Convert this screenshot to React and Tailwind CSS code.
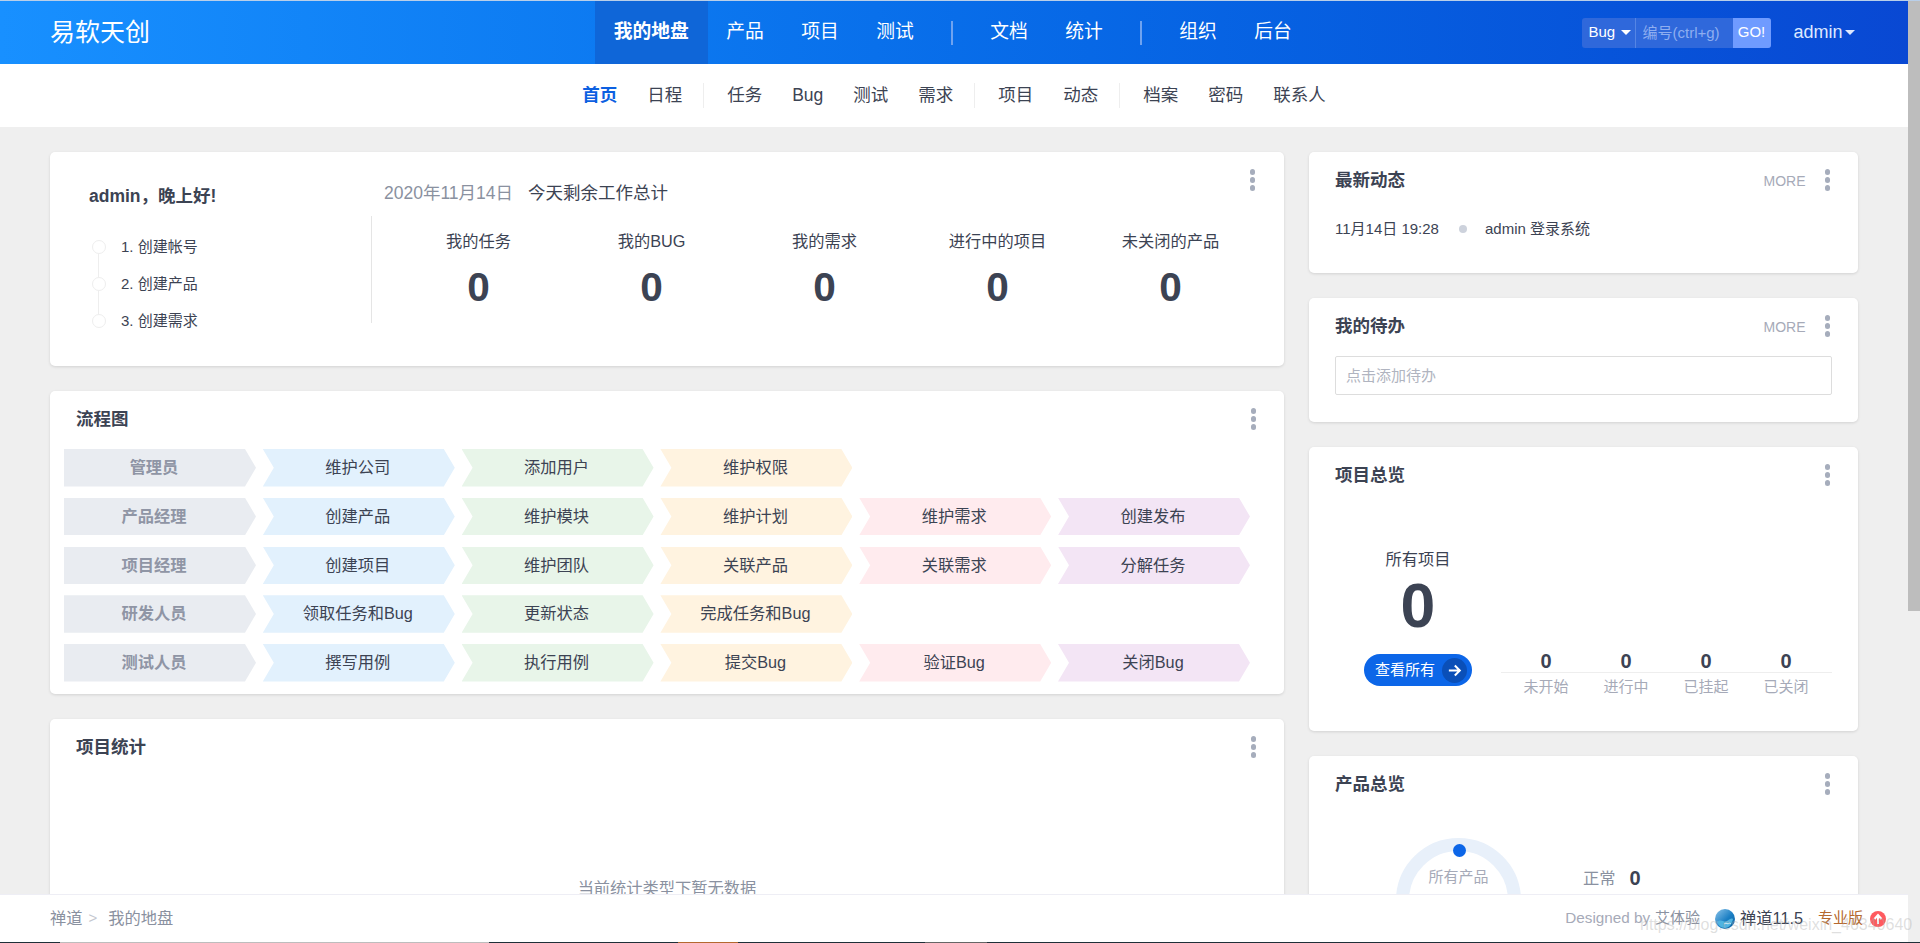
import React from "react";

const mainNav = [
  { text: "我的地盘", active: true },
  { text: "产品" },
  { text: "项目" },
  { text: "测试" },
  { divider: true },
  { text: "文档" },
  { text: "统计" },
  { divider: true },
  { text: "组织" },
  { text: "后台" },
];

const subNav = [
  { text: "首页", active: true },
  { text: "日程" },
  { divider: true },
  { text: "任务" },
  { text: "Bug" },
  { text: "测试" },
  { text: "需求" },
  { divider: true },
  { text: "项目" },
  { text: "动态" },
  { divider: true },
  { text: "档案" },
  { text: "密码" },
  { text: "联系人" },
];

const stats = ["我的任务", "我的BUG", "我的需求", "进行中的项目", "未关闭的产品"];

const flowRows = [
  ["管理员", "维护公司", "添加用户", "维护权限"],
  ["产品经理", "创建产品", "维护模块", "维护计划", "维护需求", "创建发布"],
  ["项目经理", "创建项目", "维护团队", "关联产品", "关联需求", "分解任务"],
  ["研发人员", "领取任务和Bug", "更新状态", "完成任务和Bug"],
  ["测试人员", "撰写用例", "执行用例", "提交Bug", "验证Bug", "关闭Bug"],
];

const arrowColors = ["bg-[#e2f1fd]", "bg-[#e8f5e9]", "bg-[#fff3e0]", "bg-[#ffebee]", "bg-[#f3e5f5]"];

const Dots = () => (
  <div className="flex flex-col gap-[2.5px]">
    <span className="h-[5.5px] w-[5.5px] rounded-full bg-[#a6adbc]" />
    <span className="h-[5.5px] w-[5.5px] rounded-full bg-[#a6adbc]" />
    <span className="h-[5.5px] w-[5.5px] rounded-full bg-[#a6adbc]" />
  </div>
);

const Card = ({ title, more, className = "", children }) => (
  <div className={`shrink-0 overflow-hidden rounded-[5px] bg-white shadow-[0_1px_3px_rgba(0,0,0,0.12)] ${className}`}>
    <div className="mt-[16px] flex h-[24px] items-center pl-[26px] pr-[28px]">
      <h3 className="text-[17.5px] font-bold leading-[24px] text-[#3c4353]">{title}</h3>
      {more && <span className="ml-auto mr-[19px] mt-[2px] text-[14px] text-[#a6aab8]">MORE</span>}
      <div className={more ? "" : "ml-auto"}>
        <Dots />
      </div>
    </div>
    {children}
  </div>
);

const Header = () => (
  <div className="flex h-[63px] items-center bg-linear-to-r from-[#1890ff] to-[#0948d3] pl-[50px] text-white">
    <div className="w-[545px] text-[25px] leading-[63px]">易软天创</div>
    <div className="flex h-full items-center text-[18.75px]">
      {mainNav.map((item, i) =>
        item.divider ? (
          <span key={i} className="mx-[18.5px] h-[24px] w-[2px] bg-[#6fa3f0]" />
        ) : (
          <a
            key={i}
            className={`flex h-full items-center px-[18.75px] ${item.active ? "bg-[#0f66d8] font-bold" : ""}`}
          >
            {item.text}
          </a>
        )
      )}
    </div>
    <div className="ml-[271px] flex h-[30px] w-[189px] items-center overflow-hidden rounded-[3px] bg-[#2f68db] text-[15px]">
      <div className="flex h-full w-[54px] items-center border-r border-[#5585e4] pl-[7px]">
        Bug
        <span className="ml-[6px] h-0 w-0 border-x-[5px] border-t-[5px] border-x-transparent border-t-white" />
      </div>
      <input
        placeholder="编号(ctrl+g)"
        className="h-full w-[97px] bg-transparent pl-[7px] outline-none placeholder:text-[#8eaef0]"
      />
      <div className="flex h-full flex-1 items-center justify-center bg-[#6f9bff]">GO!</div>
    </div>
    <div className="ml-[23px] flex items-center text-[18px] text-[#dde8ff]">
      admin
      <span className="ml-[2px] h-0 w-0 border-x-[5px] border-t-[5px] border-x-transparent border-t-[#dde8ff]" />
    </div>
  </div>
);

const SubNav = () => (
  <div className="flex h-[63px] items-center justify-center bg-white text-[17.5px] text-[#3c4353]">
    {subNav.map((item, i) =>
      item.divider ? (
        <span key={i} className="ml-[6px] mr-[8px] h-[25px] w-px bg-[#eeeeee]" />
      ) : (
        <a key={i} className={`px-[15px] ${item.active ? "font-bold text-[#0c60e1]" : ""}`}>
          {item.text}
        </a>
      )
    )}
  </div>
);

const Welcome = () => (
  <div className="relative flex h-[214px] shrink-0 rounded-[5px] bg-white shadow-[0_1px_3px_rgba(0,0,0,0.12)]">
    <div className="absolute right-[29px] top-[17px]">
      <Dots />
    </div>
    <div className="w-[321px] pl-[39px] pt-[32px]">
      <div className="text-[17.5px] font-bold leading-[24px] text-[#3c4353]">admin，晚上好!</div>
      <div className="ml-[2px] mt-[32px] text-[15px] text-[#3c4353]">
        {["1. 创建帐号", "2. 创建产品", "3. 创建需求"].map((step, i) => (
          <div key={step} className="flex h-[37px]">
            <div className="flex w-[15px] flex-col items-center">
              <span className="h-[14px] w-[14px] shrink-0 rounded-full border border-[#eeeeee]" />
              {i < 2 && <span className="w-px flex-1 bg-[#eeeeee]" />}
            </div>
            <span className="ml-[15px] leading-[14px]">{step}</span>
          </div>
        ))}
      </div>
    </div>
    <div className="flex-1 pt-[29px]">
      <div className="ml-[13px] flex h-[24px] items-center text-[17.5px]">
        <span className="text-[#8a91a0]">2020年11月14日</span>
        <span className="ml-[15px] text-[#3c4353]">今天剩余工作总计</span>
      </div>
      <div className="mt-[11px] grid h-[107px] w-[886px] grid-cols-[repeat(5,173px)] border-l border-[#e5e5e5] pl-[20px] pt-[13px]">
        {stats.map((label) => (
          <div key={label} className="text-center text-[#3c4353]">
            <div className="text-[16.25px] leading-[24px]">{label}</div>
            <div className="mt-[11px] text-[40.6px] font-bold leading-[46px]">0</div>
          </div>
        ))}
      </div>
    </div>
  </div>
);

const FlowChart = () => (
  <Card title="流程图" className="h-[303px]">
    <div className="flex flex-col gap-[11.25px] px-[14px] pt-[18px]">
      {flowRows.map((row) => (
        <div key={row[0]} className="flex gap-[6.8px]">
          {row.map((text, i) =>
            i === 0 ? (
              <div
                key={text}
                className="flex h-[37.5px] w-[192px] items-center justify-center bg-[#e9ecf1] pb-[1px] pr-[12px] text-[16.25px] font-bold text-[#8f95a5] [clip-path:polygon(0_0,calc(100%-11px)_0,100%_50%,calc(100%-11px)_100%,0_100%)]"
              >
                {text}
              </div>
            ) : (
              <div
                key={text}
                className={`flex h-[37.5px] w-[192px] items-center justify-center pb-[1px] pr-[2px] text-[16.25px] text-[#3c4353] [clip-path:polygon(0_0,calc(100%-11px)_0,100%_50%,calc(100%-11px)_100%,0_100%,11px_50%)] ${arrowColors[i - 1]}`}
              >
                {text}
              </div>
            )
          )}
        </div>
      ))}
    </div>
  </Card>
);

const ProjectOverview = () => (
  <Card title="项目总览" className="h-[284px]">
    <div className="flex pl-[55px] pr-[26px]">
      <div className="flex w-[108px] flex-col items-center pt-[60px]">
        <div className="text-[16.25px] leading-[24px] text-[#3c4353]">所有项目</div>
        <div className="mt-[3px] text-[62.5px] font-bold leading-[62px] text-[#3c4353]">0</div>
        <a className="mt-[18px] flex h-[32px] w-[108px] items-center rounded-full bg-[#0c66e8] pl-[11px] text-[15px] text-white">
          查看所有
          <span className="ml-[7px] flex h-[25px] w-[25px] items-center justify-center rounded-full bg-[#0a4fb8]">
            <svg width="15" height="15" viewBox="0 0 24 24" fill="none" stroke="white" strokeWidth="3.2">
              <path d="M3 12h17M12.5 4l8 8-8 8" />
            </svg>
          </span>
        </a>
      </div>
      <div className="ml-[29px] mt-[163px] w-[331px]">
        <div className="grid grid-cols-[repeat(4,80px)] border-b border-[#eeeeee] pl-[5px]">
          {[0, 1, 2, 3].map((i) => (
            <div key={i} className="text-center text-[20px] font-bold leading-[22px] text-[#3c4353]">
              0
            </div>
          ))}
        </div>
        <div className="mt-[2px] grid grid-cols-[repeat(4,80px)] pl-[5px]">
          {["未开始", "进行中", "已挂起", "已关闭"].map((label) => (
            <div key={label} className="text-center text-[15px] leading-[24px] text-[#a6aab8]">
              {label}
            </div>
          ))}
        </div>
      </div>
    </div>
  </Card>
);

const ProductOverview = () => (
  <Card title="产品总览" className="h-[320px]">
    <div className="mt-[42px] flex pl-[87px]">
      <div className="relative h-[125px] w-[125px] rounded-full border-[13px] border-[#e8f0fa] pt-[14px] text-center text-[15px] leading-[24px] text-[#a6aab8]">
        <span className="absolute left-[44px] top-[-7px] h-[13px] w-[13px] rounded-full bg-[#0c66e8]" />
        所有产品
      </div>
      <div className="ml-[62px] mt-[28px] flex h-[24px] items-center">
        <span className="text-[16.25px] text-[#8a91a0]">正常</span>
        <span className="ml-[14px] text-[20px] font-bold text-[#3c4353]">0</span>
      </div>
    </div>
  </Card>
);

const ChandaoLogo = () => (
  <svg width="20" height="20" viewBox="0 0 20 20">
    <defs>
      <linearGradient id="zentao" x1="0" y1="0" x2="1" y2="1">
        <stop offset="0" stopColor="#8cc4ea" />
        <stop offset="0.55" stopColor="#1b7fc4" />
        <stop offset="1" stopColor="#0d5c9c" />
      </linearGradient>
    </defs>
    <circle cx="10" cy="10" r="10" fill="url(#zentao)" />
    <path d="M2 13c4-4 7 1 10-1s4-3 6-2c-1 5-4 9-8 9-4 0-7-3-8-6z" fill="#4fb3e0" />
    <path d="M9 15c1-1 3-1 4 0M13 15c1-1 2-1 3 0" stroke="#d8f0fb" fill="none" />
  </svg>
);

const Footer = () => (
  <div className="flex h-[48px] items-center border-t border-[#eeeef5] bg-white pl-[50px] pr-[22px]">
    <span className="text-[16.25px] text-[#8a91a0]">禅道</span>
    <span className="ml-[6px] text-[15px] text-[#c4c7cf]">&gt;</span>
    <span className="ml-[11px] text-[16.25px] text-[#8a91a0]">我的地盘</span>
    <div className="ml-auto flex items-center text-[15px]">
      <span className="text-[15.25px] text-[#a6aab8]">Designed by</span>
      <span className="ml-[5px] text-[#8a91a0]">艾体验</span>
      <span className="ml-[15px] mr-[5px] flex">
        <ChandaoLogo />
      </span>
      <span className="text-[16.25px] text-[#3c4353]">禅道11.5</span>
      <span className="ml-[15px] text-[#b5692f]">专业版</span>
      <svg className="ml-[7px]" width="16" height="16" viewBox="0 0 16 16">
        <circle cx="8" cy="8" r="8" fill="#ff5a5f" />
        <path d="M8 13V5M4.5 8L8 4l3.5 4" stroke="white" strokeWidth="2" fill="none" />
      </svg>
    </div>
  </div>
);

export default function App() {
  return (
    <div className="relative flex h-[943px] w-full flex-col overflow-hidden bg-[#efefef] font-['Liberation_Sans','Noto_Sans_CJK_SC',sans-serif]">
      <div className="h-px shrink-0 bg-[#b9cfe9]" />
      <div className="flex min-h-0 flex-1">
        <div className="flex w-[1908px] flex-col">
          <Header />
          <SubNav />
          <div className="flex min-h-0 flex-1 gap-[25px] overflow-hidden px-[50px] pt-[25px]">
            <div className="flex w-[1234px] shrink-0 flex-col gap-[25px]">
              <Welcome />
              <FlowChart />
              <Card title="项目统计" className="h-[400px]">
                <div className="pt-[117px] text-center text-[16.25px] leading-[24px] text-[#8a91a0]">
                  当前统计类型下暂无数据
                </div>
              </Card>
            </div>
            <div className="flex w-[549px] shrink-0 flex-col gap-[25px]">
              <Card title="最新动态" more className="h-[121px]">
                <div className="mt-[25px] flex items-center px-[26px] text-[15px] leading-[24px] text-[#3c4353]">
                  <span>11月14日 19:28</span>
                  <span className="ml-[20px] h-[8px] w-[8px] rounded-full bg-[#cdd2dc]" />
                  <span className="ml-[18px]">admin 登录系统</span>
                </div>
              </Card>
              <Card title="我的待办" more className="h-[124px]">
                <div className="mt-[18px] px-[26px]">
                  <input
                    placeholder="点击添加待办"
                    className="h-[39px] w-full rounded-[2px] border border-[#dddddd] px-[10px] text-[15px] outline-none placeholder:text-[#b0b4c0]"
                  />
                </div>
              </Card>
              <ProjectOverview />
              <ProductOverview />
            </div>
          </div>
          <Footer />
        </div>
        <div className="w-[12px]">
          <div className="h-[610px] bg-[#bdbdbd]" />
        </div>
      </div>
      <div className="flex h-px shrink-0 bg-[#1f2f38]">
        <span className="ml-[60px] w-[429px] bg-[#bdbdbd]" />
        <span className="ml-[189px] w-[60px] bg-[#b5692f]" />
        <span className="ml-[187px] w-[62px] bg-[#666666]" />
      </div>
      <span className="absolute left-[1640px] top-[915px] text-[16px] leading-[20px] text-[#aaaaaa60]">
        https://blog.csdn.net/weixin_46340640
      </span>
    </div>
  );
}
